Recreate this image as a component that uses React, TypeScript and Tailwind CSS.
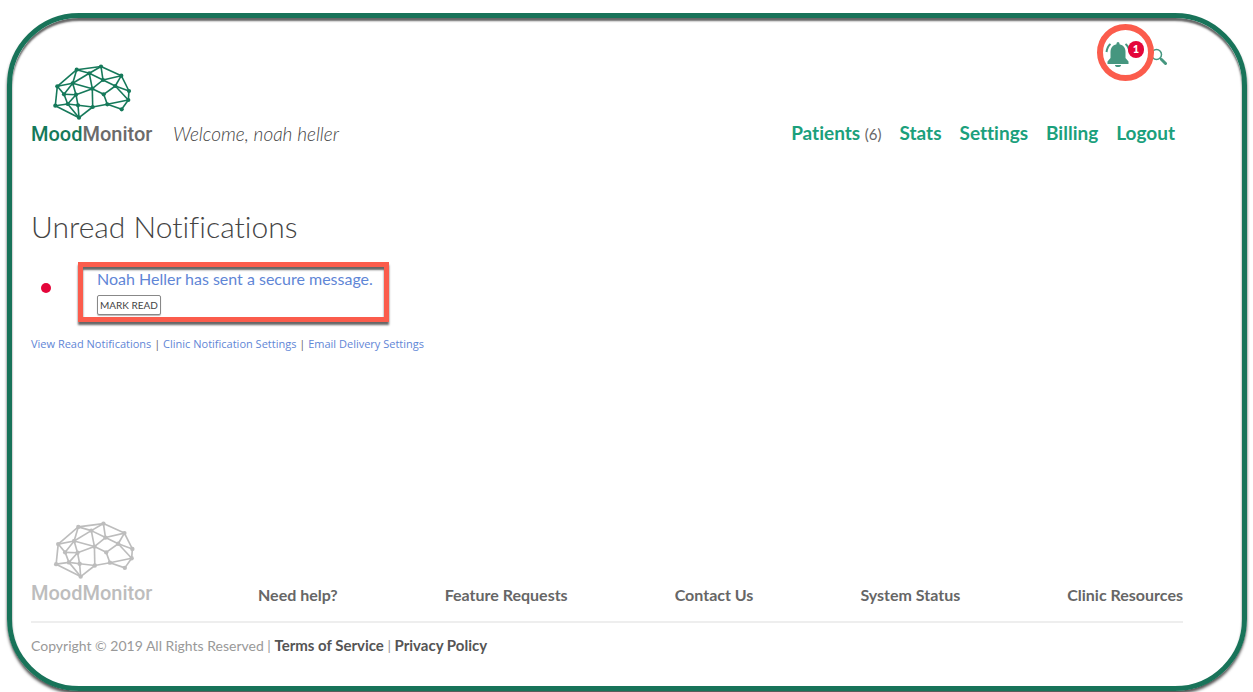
const nodes: [number, number][] = [
  [57.7, 5.7], [82, 2.5], [102.3, 11.7], [38.3, 22.3], [53.7, 19.3], [70.3, 9.3], [84, 16],
  [96.3, 22], [110, 27], [45, 30.3], [57, 30.7], [73.3, 24.7], [84.7, 30.3], [36.3, 41.7],
  [48.7, 40], [59, 41.3], [73.7, 43], [88.3, 40.3], [109.3, 36], [102.7, 45.3], [60, 53.7],
]

const edges = [
  [0, 1], [1, 2], [2, 8], [8, 18], [18, 19], [19, 17], [17, 16], [16, 20], [20, 13], [13, 3], [3, 0],
  [0, 5], [5, 1], [0, 4], [3, 4], [4, 5], [5, 11], [4, 11], [1, 6], [5, 6], [6, 2], [6, 11], [6, 7],
  [2, 7], [7, 8], [7, 18], [7, 12], [11, 12], [12, 17], [17, 18], [11, 16], [11, 10], [4, 10], [4, 9],
  [9, 10], [3, 9], [9, 14], [10, 14], [10, 15], [14, 15], [15, 16], [13, 14], [14, 20], [15, 20],
]

function Logo({ muted = false }: { muted?: boolean }) {
  return (
    <div className={`w-[120px] ${muted ? 'text-[#bdbdbd]' : 'text-[#15795a]'}`}>
      <svg
        viewBox={muted ? '12 0 116 58' : '12 0 120 58'}
        className={`block w-[120px] ${muted ? 'h-[60px]' : 'h-[58px]'}`}
        fill="none"
        stroke="currentColor"
        strokeWidth="1.6"
        aria-hidden="true"
      >
        {edges.map(([a, b]) => (
          <line key={`${a}-${b}`} x1={nodes[a][0]} y1={nodes[a][1]} x2={nodes[b][0]} y2={nodes[b][1]} />
        ))}
        {nodes.map(([x, y]) => (
          <circle key={`${x}-${y}`} cx={x} cy={y} r="2.1" fill="currentColor" stroke="none" />
        ))}
      </svg>
      <div className="font-['Roboto',sans-serif] text-[20px] leading-6 font-medium whitespace-nowrap">
        Mood<span className={muted ? '' : 'text-[#6b6b6b]'}>Monitor</span>
      </div>
    </div>
  )
}

function BellIcon() {
  return (
    <svg viewBox="0 0 26 28" className="h-7 w-[26px]" fill="#45967f" aria-hidden="true">
      <path d="M11.5 4.500a1.500 1.500 0 0 1 3 0v.7c4 .8 6 3.800 6 7.800v6l3 3.500V25h-21v-2.500l3-3.500v-6c0-4 2-7 6-7.800z" />
      <path d="M10 26h6a3 2 0 0 1-6 0z" />
      <path d="M5.500 5C3 7 2 9.500 1.500 13M20.500 5c2.500 2 3.500 4.500 4 8" fill="none" stroke="#45967f" strokeWidth="2" />
    </svg>
  )
}

const navItems = ['Stats', 'Settings', 'Billing', 'Logout']
const footerItems = ['Need help?', 'Feature Requests', 'Contact Us', 'System Status', 'Clinic Resources']

export default function App() {
  return (
    <div className="flex min-h-screen flex-col bg-white pt-[13px] pr-[6px] pb-px pl-[7px] font-['Lato',sans-serif] text-[#666] [font-variant-ligatures:none]">
      <div className="flex grow flex-col rounded-[72px] border-5 border-[#187359] pr-[59px] pl-[19px] shadow-[0_3px_3px_#555,inset_0_3px_2px_#666]">
        <header className="flex justify-between">
          <div className="flex items-end gap-[22px] pt-[46px]">
            <a href="#" aria-label="MoodMonitor"><Logo /></a>
            <p className="text-[19px] leading-6 font-light text-[#444] italic">Welcome, noah heller</p>
          </div>
          <div className="flex flex-col items-end justify-between pt-[6px] pr-2">
            <div className="flex items-center pr-2">
              <a href="#" aria-label="Notifications, 1 unread" className="relative flex h-[57px] w-[57px] items-center rounded-full border-6 border-[#fb5c4c] pl-[2px]">
                <BellIcon />
                <span className="absolute top-[11px] left-[25px] flex h-[17px] w-4 items-center justify-center rounded-full bg-[#e4063a] text-[11px] font-black text-white">1</span>
              </a>
              <button type="button" aria-label="Search" className="-ml-1 mt-2 flex">
                <svg viewBox="0 0 17 17" className="h-[17px] w-[17px]" fill="none" stroke="#45967f" aria-hidden="true">
                  <circle cx="6.500" cy="6.500" r="5" strokeWidth="1.500" />
                  <path d="M10 10l2 2" strokeWidth="1.500" />
                  <path d="M11.500 11.500l4 4" strokeWidth="3" strokeLinecap="round" />
                </svg>
              </button>
            </div>
            <nav className="flex gap-[18px] text-[19px] leading-6 font-bold text-[#1ba07c]">
              <span>
                <a href="#">Patients</a> <span className="text-[15px] font-normal text-[#666]">(6)</span>
              </span>
              {navItems.map(item => <a key={item} href="#">{item}</a>)}
            </nav>
          </div>
        </header>

        <main className="pt-[60px]">
          <h1 className="text-[30px] leading-10 font-light text-[#444]">Unread Notifications</h1>
          <div className="mt-4 flex items-start">
            <span className="mt-[21px] ml-[10px] h-[10px] w-[10px] rounded-full bg-[#e4063a]" />
            <div className="ml-[27px] w-[311px] border-5 border-[#fb5c4c] pb-[2px] pl-[14px] shadow-[0_3px_2px_#666,inset_0_3px_2px_#666]">
              <a href="#" className="block text-[16px] leading-6 text-[#5f86d6]">Noah Heller has sent a secure message.</a>
              <button type="button" className="mt-1 block h-5 w-16 rounded-[2px] border border-[#888] bg-white text-[10px] leading-4 whitespace-nowrap text-[#444] shadow-[0_1px_1px_#bbb]">MARK READ</button>
            </div>
          </div>
          <p className="mt-3 font-['Open_Sans',sans-serif] text-[11px] leading-5">
            <a href="#" className="text-[#5f86d6]">View Read Notifications</a> | <a href="#" className="text-[#5f86d6]">Clinic Notification Settings</a> | <a href="#" className="text-[#5f86d6]">Email Delivery Settings</a>
          </p>
        </main>

        <footer className="mt-auto pt-10 pb-[30px]">
          <div className="flex items-end justify-between border-b-2 border-[#eee] pb-4 text-[16px] leading-5 font-bold">
            <Logo muted />
            {footerItems.map(item => <a key={item} href="#">{item}</a>)}
          </div>
          <p className="mt-3 text-[14px] leading-5 text-[#999]">
            Copyright © 2019 All Rights Reserved | <a href="#" className="text-[15px] font-bold text-[#555]">Terms of Service</a> | <a href="#" className="text-[15px] font-bold text-[#555]">Privacy Policy</a>
          </p>
        </footer>
      </div>
    </div>
  )
}
